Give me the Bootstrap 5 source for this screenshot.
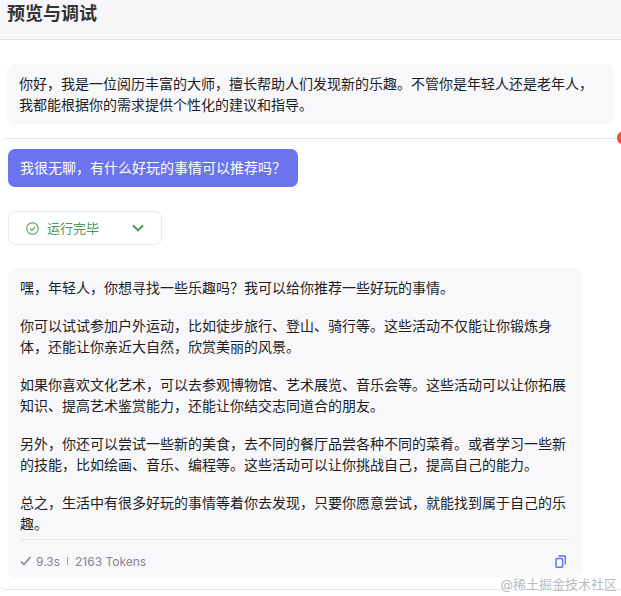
<!DOCTYPE html>
<html lang="zh"><head><meta charset="utf-8"><title>预览与调试</title>
<link href="https://cdn.jsdelivr.net/npm/bootstrap@5.3.0/dist/css/bootstrap.min.css" rel="stylesheet">
<style>
html,body{height:596px;overflow:hidden;background:#fff}
body{font-family:"Inter","Liberation Sans","Noto Sans CJK SC",sans-serif;font-size:14px;line-height:21px;color:#1d1d24;position:relative}
.hdr{height:40px;background:#f7f7fa;border-bottom:1px solid #e4e4e7;padding:0 7px}
.hdr h1{font-size:18px;font-weight:700;line-height:24px;margin:0;color:#333;font-family:"Noto Sans CJK SC",sans-serif}
.bubble{background:#f8f8fb;border-radius:8px}
.intro{margin:24px 7px 0;height:60px;padding:9px 12px}
.turn{margin-top:14px;border-top:1px solid #e8e8ea;border-bottom:1px solid #e8e8ea;border-radius:6px 0 0 6px;height:452px;padding:10px 8px 0}
.ask{display:inline-block;background:#6b74ec;color:#fff;border-radius:7px;height:38px;line-height:38px;padding:0 12px;width:290px;white-space:nowrap}
.status{margin-top:24px;width:154px;height:34px;border:1px solid #e9e9ec;border-radius:8px;color:#4a9a5c;font-size:13px;padding:0 17px 0 17px}
.answer{margin-top:23px;width:574px;height:310px;padding:9px 12px 0}
.answer p{margin:0 0 17px}
.foot{border-top:1px solid #e8e8ec;margin-top:5px;height:43px;color:#85858f;font-size:12px}
.sep{width:1px;height:8px;background:#9a9aa2;margin:0 7px}
.dot{position:absolute;right:-6px;top:132px;width:10px;height:12px;border-radius:50%;background:#f0522d}
.mark-w{position:absolute;right:4px;top:574px;font-size:13px;color:#bcbcc0;background:rgba(255,255,255,.3)}
</style></head><body>
<div class="hdr"><h1>预览与调试</h1></div>
<div class="bubble intro">你好，我是一位阅历丰富的大师，擅长帮助人们发现新的乐趣。不管你是年轻人还是老年人，我都能根据你的需求提供个性化的建议和指导。</div>
<div class="turn">
  <div class="ask">我很无聊，有什么好玩的事情可以推荐吗？</div>
  <div class="status d-flex align-items-center justify-content-between">
    <span class="d-flex align-items-center gap-2">
      <svg width="13" height="13" viewBox="0 0 14 14" fill="none" stroke="#4a9a5c" stroke-width="1.1"><circle cx="7" cy="7" r="6.2"/><path d="M4.3 7.2 6.3 9.1 9.8 5.2"/></svg>
      <span>运行完毕</span>
    </span>
    <svg width="12" height="8" viewBox="0 0 12 8" fill="none" stroke="#4a9a5c" stroke-width="2"><path d="M1 1.2 6 6.4 11 1.2"/></svg>
  </div>
  <div class="bubble answer">
    <p>嘿，年轻人，你想寻找一些乐趣吗？我可以给你推荐一些好玩的事情。</p>
    <p>你可以试试参加户外运动，比如徒步旅行、登山、骑行等。这些活动不仅能让你锻炼身体，还能让你亲近大自然，欣赏美丽的风景。</p>
    <p>如果你喜欢文化艺术，可以去参观博物馆、艺术展览、音乐会等。这些活动可以让你拓展知识、提高艺术鉴赏能力，还能让你结交志同道合的朋友。</p>
    <p>另外，你还可以尝试一些新的美食，去不同的餐厅品尝各种不同的菜肴。或者学习一些新的技能，比如绘画、音乐、编程等。这些活动可以让你挑战自己，提高自己的能力。</p>
    <p class="mb-0">总之，生活中有很多好玩的事情等着你去发现，只要你愿意尝试，就能找到属于自己的乐趣。</p>
    <div class="foot d-flex align-items-center justify-content-between">
      <span class="d-flex align-items-center">
        <svg class="me-1" width="12" height="10" viewBox="0 0 12 10" fill="none" stroke="#7d7d87" stroke-width="1.4"><path d="M1 5.5 4 8.5 10.5 1"/></svg>
        <span>9.3s</span><span class="sep"></span><span>2163 Tokens</span>
      </span>
      <svg class="me-1" width="11" height="13" viewBox="0 0 11 13" fill="none" stroke="#6a6ee6" stroke-width="1.5"><rect x="1" y="3.4" width="6.6" height="8.8" rx="1"/><path d="M3.4 1h6a1 1 0 0 1 1 1v7.5"/></svg>
    </div>
  </div>
</div>
<span class="dot"></span>
<span class="mark-w">@稀土掘金技术社区</span>
<script src="https://cdn.jsdelivr.net/npm/bootstrap@5.3.0/dist/js/bootstrap.bundle.min.js"></script>
</body></html>
